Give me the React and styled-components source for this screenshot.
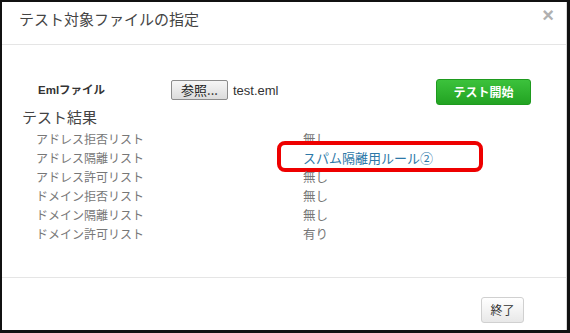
import React from "react";
import styled, { createGlobalStyle } from "styled-components";

const GlobalStyle = createGlobalStyle`
  html, body {
    margin: 0;
    padding: 0;
    background: #fff;
  }
  body {
    font-family: "Liberation Sans", "Noto Sans CJK JP", sans-serif;
  }
`;

const rows = [
  { label: "アドレス拒否リスト", value: "無し" },
  { label: "アドレス隔離リスト", value: "スパム隔離用ルール②", link: true },
  { label: "アドレス許可リスト", value: "無し" },
  { label: "ドメイン拒否リスト", value: "無し" },
  { label: "ドメイン隔離リスト", value: "無し" },
  { label: "ドメイン許可リスト", value: "有り" },
];

const App = () => {
  return (
    <>
      <GlobalStyle />
      <Modal>
        <Inner>
          <Header>
            <Title>テスト対象ファイルの指定</Title>
            <Close>×</Close>
          </Header>
          <Body>
            <FileRow>
              <FileLabel>Emlファイル</FileLabel>
              <BrowseButton>参照...</BrowseButton>
              <FileName>test.eml</FileName>
              <StartButton>テスト開始</StartButton>
            </FileRow>
            <ResultTitle>テスト結果</ResultTitle>
            <ResultList>
              {rows.map((r) => (
                <ResultRow key={r.label}>
                  <ResultLabel>{r.label}</ResultLabel>
                  <ResultValue $link={r.link}>
                    {r.value}
                    {r.link && <Highlight />}
                  </ResultValue>
                </ResultRow>
              ))}
            </ResultList>
          </Body>
          <Footer>
            <EndButton>終了</EndButton>
          </Footer>
        </Inner>
      </Modal>
    </>
  );
};

const Modal = styled.div`
  width: 570px;
  height: 333px;
  box-sizing: border-box;
  border-style: solid;
  border-color: #111;
  border-width: 2px 3px 3px 2px;
  background: #fff;
`;

const Inner = styled.div`
  height: 100%;
  box-sizing: border-box;
  border-right: 1px solid #d8d8d8;
  display: flex;
  flex-direction: column;
`;

const Header = styled.div`
  height: 42px;
  flex: none;
  border-bottom: 1px solid #e5e5e5;
  display: flex;
  align-items: center;
  justify-content: space-between;
  padding: 0 12px 0 17px;
`;

const Title = styled.h4`
  margin: 0;
  margin-top: -8px;
  font-family: "Noto Sans CJK JP", sans-serif;
  font-weight: 400;
  font-size: 15px;
  line-height: 20px;
  color: #444;
`;

const Close = styled.span`
  margin-top: -16px;
  font-family: "Liberation Sans", sans-serif;
  font-weight: 700;
  font-size: 20px;
  line-height: 20px;
  color: #b0b0b0;
`;

const Body = styled.div`
  flex: 1;
  padding: 34px 35px 0 20px;
  border-bottom: 1px solid #e5e5e5;
`;

const FileRow = styled.div`
  display: flex;
  align-items: center;
  height: 26px;
`;

const FileLabel = styled.span`
  width: 131px;
  margin-top: -6px;
  padding-left: 16px;
  box-sizing: border-box;
  font-family: "Liberation Sans", "Noto Sans CJK JP", sans-serif;
  font-weight: 700;
  font-size: 11.5px;
  color: #333;
`;

const BrowseButton = styled.button`
  width: 57px;
  height: 20px;
  padding: 0;
  margin-left: 18px;
  margin-top: -4px;
  border: 1px solid #8c8c8c;
  border-radius: 2px;
  background: linear-gradient(#f6f6f6, #dcdcdc);
  font-family: "Noto Sans CJK JP", sans-serif;
  font-size: 13px;
  line-height: 16px;
  color: #222;
`;

const FileName = styled.span`
  margin-left: 5px;
  margin-top: -4px;
  font-family: "Liberation Sans", sans-serif;
  font-size: 13px;
  color: #333;
`;

const StartButton = styled.button`
  margin-left: auto;
  width: 95px;
  height: 26px;
  padding: 0;
  border: 1px solid #1e9a1e;
  border-radius: 3px;
  background: linear-gradient(#3cc23c, #22a322);
  color: #fff;
  font-family: "Noto Sans CJK JP", sans-serif;
  font-weight: 700;
  font-size: 12px;
  line-height: 16px;
`;

const ResultTitle = styled.div`
  margin-top: 2px;
  font-family: "Noto Sans CJK JP", sans-serif;
  font-size: 15px;
  line-height: 20px;
  color: #444;
`;

const ResultList = styled.div`
  display: flex;
  flex-direction: column;
  padding: 2px 0 0 14px;
`;

const ResultRow = styled.div`
  display: flex;
  height: 19px;
  align-items: center;
`;

const ResultLabel = styled.span`
  width: 267px;
  font-family: "Noto Sans CJK JP", sans-serif;
  font-size: 12px;
  line-height: 16px;
  color: #777;
`;

const ResultValue = styled.span`
  position: relative;
  font-family: "Noto Sans CJK JP", sans-serif;
  font-size: ${(p) => (p.$link ? "13px" : "12.5px")};
  line-height: 16px;
  color: ${(p) => (p.$link ? "#2d78a8" : "#777")};
`;

const Highlight = styled.span`
  position: absolute;
  left: -26px;
  top: -9px;
  width: 206px;
  height: 31px;
  box-sizing: border-box;
  border: 4px solid #ee0000;
  border-radius: 8px;
`;

const Footer = styled.div`
  height: 52px;
  flex: none;
  display: flex;
  align-items: center;
  justify-content: flex-end;
  padding-right: 42px;
`;

const EndButton = styled.button`
  width: 43px;
  height: 26px;
  margin-top: 11px;
  padding: 0;
  border: 1px solid #d0d0d0;
  border-radius: 3px;
  background: linear-gradient(#fff, #e8e8e8);
  font-family: "Noto Sans CJK JP", sans-serif;
  font-size: 12px;
  line-height: 16px;
  color: #333;
`;

export default App;
